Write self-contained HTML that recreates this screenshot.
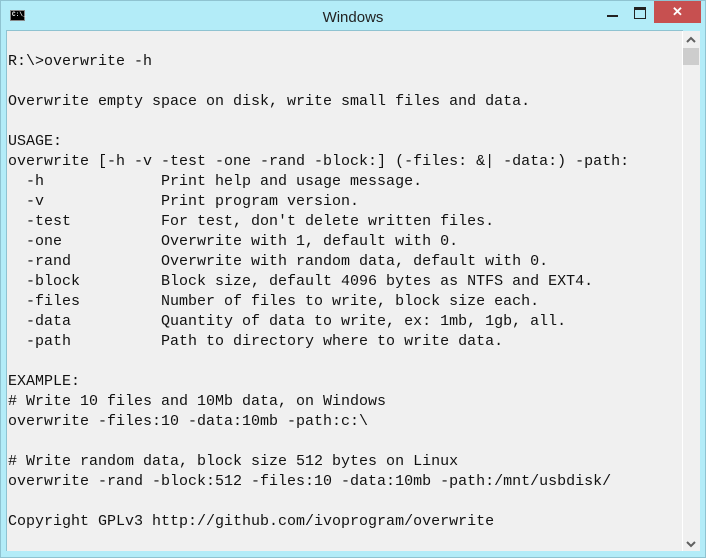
<!DOCTYPE html>
<html><head><style>
html,body{margin:0;padding:0;width:706px;height:558px;overflow:hidden;background:#b3ecf8;}
.win{position:absolute;left:0;top:0;width:704px;height:556px;border:1px solid #8fc3d1;background:#b3ecf8;}
.title{position:absolute;left:0;top:0;width:704px;height:30px;text-align:center;font:15px "Liberation Sans",sans-serif;line-height:33px;color:#222;}
.icon{position:absolute;left:9px;top:9px;width:15px;height:11px;background:#000;border:1px solid #888;box-sizing:border-box;color:#fff;font:bold 6px "Liberation Mono",monospace;line-height:8px;padding-left:1px;}
.min{position:absolute;left:606px;top:14px;width:11px;height:2px;background:#222;}
.max{position:absolute;left:633px;top:6px;width:10px;height:8px;border:1px solid #222;border-top:3px solid #222;}
.close{position:absolute;left:653px;top:0;width:47px;height:22px;background:#c75050;color:#fff;text-align:center;font:bold 13px "Liberation Sans",sans-serif;line-height:22px;}
.client{position:absolute;left:6px;top:30px;width:676px;height:520px;background:#f0f0f0;border-top:1px solid #8fc3d1;border-left:1px solid #8fc3d1;}
pre{margin:0;position:absolute;left:1px;top:1px;font:15px "Liberation Mono",monospace;line-height:20px;color:#111;}
.sb{position:absolute;left:682px;top:31px;width:17px;height:520px;background:#f0f0f0;border-left:1px solid #fff;}
.thumb{position:absolute;left:683px;top:48px;width:16px;height:17px;background:#cdcdcd;}
svg{position:absolute;}
</style></head><body>
<div class="win">
<div class="title">Windows</div>
<div class="icon">C:\_</div>
<div class="min"></div><div class="max"></div>
<div class="close">✕</div>
</div>
<div class="client"><pre>

R:\&gt;overwrite -h

Overwrite empty space on disk, write small files and data.

USAGE:
overwrite [-h -v -test -one -rand -block:] (-files: &amp;| -data:) -path:
  -h             Print help and usage message.
  -v             Print program version.
  -test          For test, don't delete written files.
  -one           Overwrite with 1, default with 0.
  -rand          Overwrite with random data, default with 0.
  -block         Block size, default 4096 bytes as NTFS and EXT4.
  -files         Number of files to write, block size each.
  -data          Quantity of data to write, ex: 1mb, 1gb, all.
  -path          Path to directory where to write data.

EXAMPLE:
# Write 10 files and 10Mb data, on Windows
overwrite -files:10 -data:10mb -path:c:\

# Write random data, block size 512 bytes on Linux
overwrite -rand -block:512 -files:10 -data:10mb -path:/mnt/usbdisk/

Copyright GPLv3 http://github.com/ivoprogram/overwrite
</pre></div>
<div class="sb"></div>
<div class="thumb"></div>
<svg style="left:686px;top:36px" width="10" height="8"><path d="M1 6 L5 2 L9 6" stroke="#606060" stroke-width="2" fill="none"/></svg>
<svg style="left:686px;top:540px" width="10" height="8"><path d="M1 2 L5 6 L9 2" stroke="#606060" stroke-width="2" fill="none"/></svg>
</body></html>
